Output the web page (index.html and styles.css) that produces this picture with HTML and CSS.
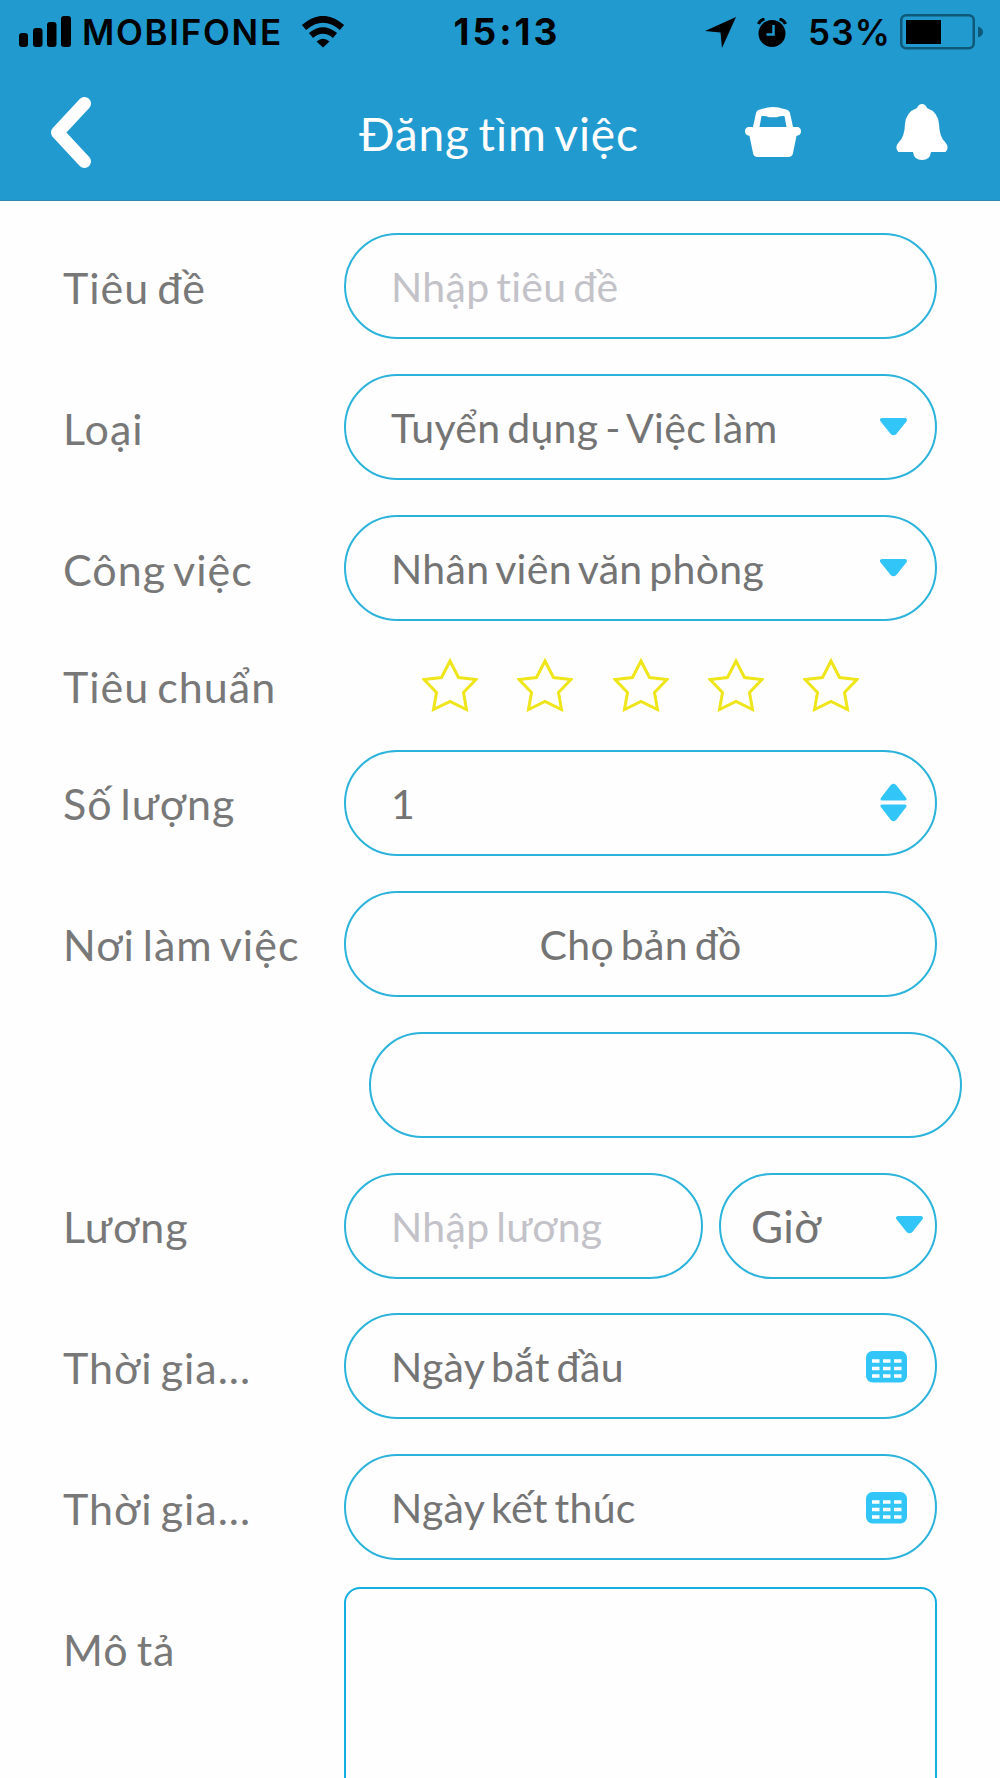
FILE: index.html
```html
<!DOCTYPE html>
<html lang="vi">
<head>
    <meta charset="UTF-8">
    <meta name="viewport" content="width=device-width, initial-scale=1.0">
    <title>Đăng tìm việc</title>
    <link rel="stylesheet" href="styles.css">
</head>
<body>
    <header class="header">
        <div class="status-bar">
            <div class="status-left">
                <svg class="signal" width="52" height="32" viewBox="0 0 52 32">
                    <rect x="0" y="17" width="9" height="14" rx="3"/>
                    <rect x="14" y="12" width="9.500" height="19" rx="3"/>
                    <rect x="28" y="6" width="9.500" height="25" rx="3"/>
                    <rect x="42" y="0" width="10" height="31" rx="3"/>
                </svg>
                <span class="carrier">MOBIFONE</span>
                <svg class="wifi" width="44" height="32" viewBox="0 0 44 32">
                    <path d="M3 11.500Q22-5 41 11.500" fill="none" stroke="#000" stroke-width="6.500"/>
                    <path d="M10 19.500Q22 9.500 34 19.500" fill="none" stroke="#000" stroke-width="6.500"/>
                    <path d="M15.500 25.500Q22 20 28.500 25.500L22 31.500z"/>
                </svg>
            </div>
            <span class="clock">15:13</span>
            <div class="status-right">
                <svg class="location" width="31" height="31" viewBox="0 0 31 31">
                    <path d="M31 0L17 31L15.500 15.500L0 14z"/>
                </svg>
                <svg class="alarm" width="30" height="29" viewBox="0 0 30 29">
                    <circle cx="15" cy="15.500" r="13.500"/>
                    <path d="M1.500 6Q3 2 7.500 1M28.500 6Q27 2 22.500 1" fill="none" stroke="#000" stroke-width="3"/>
                    <path d="M16.500 7v9.500H9.500" fill="none" stroke="#219ad0" stroke-width="2.500"/>
                </svg>
                <span class="percent">53%</span>
                <svg class="battery" width="83" height="36" viewBox="0 0 83 36">
                    <rect x="1.250" y="1.250" width="72.500" height="33" rx="5" fill="none" stroke="#0e5878" stroke-width="2.500"/>
                    <rect x="6" y="6" width="35" height="24"/>
                    <path d="M78 12.500q5 1.500 5 5.500t-5 5.500z" fill="#0e5878"/>
                </svg>
            </div>
        </div>
        <nav class="nav-bar">
            <svg class="back" width="41" height="71" viewBox="0 0 41 71">
                <path d="M34.500 6.500L7.500 35.500L34.500 64.500" fill="none" stroke="#fff" stroke-width="13" stroke-linecap="round" stroke-linejoin="round"/>
            </svg>
            <h1 class="title">Đăng tìm việc</h1>
            <div class="nav-icons">
                <svg width="56" height="50" viewBox="0 0 56 50">
                    <path d="M4 20H8L11 6Q12 2.500 17 2Q28-2 39 2Q44 2.500 45 6L48 20H52Q56 20 56 24.500Q56 28 51.500 29L48 46Q47.500 50 43 50H13Q8.500 50 8 46L4.500 29Q0 28 0 24.500Q0 20 4 20z"/>
                    <path class="basket-hole" d="M16.500 9Q22 9 24 10.200H32Q34 9 39.500 9L41.500 20H14.500z"/>
                </svg>
                <svg width="52" height="56" viewBox="0 0 52 56">
                    <path d="M26 0Q29.500 0 31 4Q42 8 43 20Q43.500 33 49 38Q54 43.500 49.500 48H35Q34 56 26 56Q18 56 17 48H2.500Q-2 43.500 3 38Q8.500 33 9 20Q10 8 21 4Q22.500 0 26 0z"/>
                </svg>
            </div>
        </nav>
    </header>

    <form class="form">
        <div class="row">
            <label>Tiêu đề</label>
            <input class="field" type="text" placeholder="Nhập tiêu đề">
        </div>
        <div class="row">
            <label>Loại</label>
            <div class="field">
                <span>Tuyển dụng - Việc làm</span>
                <svg class="arrow" width="27" height="20" viewBox="0 0 27 20"><path d="M2 2H25L15 14.500Q13.500 16 12 14.500z"/></svg>
            </div>
        </div>
        <div class="row">
            <label>Công việc</label>
            <div class="field">
                <span>Nhân viên văn phòng</span>
                <svg class="arrow" width="27" height="20" viewBox="0 0 27 20"><path d="M2 2H25L15 14.500Q13.500 16 12 14.500z"/></svg>
            </div>
        </div>
        <div class="row row-stars">
            <label>Tiêu chuẩn</label>
            <div class="stars">
                <svg width="56" height="54" viewBox="0 0 56 54"><path d="M28 3L36.500 19.500L54 21.500L41.500 34.500L44.500 51.500L28 43.500L11.500 51.500L14.500 34.500L2 21.500L19.500 19.500z"/></svg>
                <svg width="56" height="54" viewBox="0 0 56 54"><path d="M28 3L36.500 19.500L54 21.500L41.500 34.500L44.500 51.500L28 43.500L11.500 51.500L14.500 34.500L2 21.500L19.500 19.500z"/></svg>
                <svg width="56" height="54" viewBox="0 0 56 54"><path d="M28 3L36.500 19.500L54 21.500L41.500 34.500L44.500 51.500L28 43.500L11.500 51.500L14.500 34.500L2 21.500L19.500 19.500z"/></svg>
                <svg width="56" height="54" viewBox="0 0 56 54"><path d="M28 3L36.500 19.500L54 21.500L41.500 34.500L44.500 51.500L28 43.500L11.500 51.500L14.500 34.500L2 21.500L19.500 19.500z"/></svg>
                <svg width="56" height="54" viewBox="0 0 56 54"><path d="M28 3L36.500 19.500L54 21.500L41.500 34.500L44.500 51.500L28 43.500L11.500 51.500L14.500 34.500L2 21.500L19.500 19.500z"/></svg>
            </div>
        </div>
        <div class="row">
            <label>Số lượng</label>
            <div class="field">
                <span>1</span>
                <svg class="stepper" width="27" height="41" viewBox="0 0 27 41">
                    <path d="M2 16L12 3Q13.500 1.500 15 3L25 16z"/>
                    <path d="M2 23H25L15 36Q13.500 37.500 12 36z"/>
                </svg>
            </div>
        </div>
        <div class="row">
            <label>Nơi làm việc</label>
            <button class="field field-button" type="button">Chọ bản đồ</button>
        </div>
        <div class="row">
            <label></label>
            <input class="field field-shifted" type="text">
        </div>
        <div class="row">
            <label>Lương</label>
            <div class="salary">
                <input class="field" type="text" placeholder="Nhập lương">
                <div class="field field-unit">
                    <span>Giờ</span>
                    <svg class="arrow" width="27" height="20" viewBox="0 0 27 20"><path d="M2 2H25L15 14.500Q13.500 16 12 14.500z"/></svg>
                </div>
            </div>
        </div>
        <div class="row">
            <label>Thời gia...</label>
            <div class="field">
                <span>Ngày bắt đầu</span>
                <svg class="calendar" width="41" height="32" viewBox="0 0 41 32">
                    <rect width="41" height="31.500" rx="6.500"/>
                    <path d="M6 10h7.500M17 10h7.500M28 10h7.500M6 17.500h7.500M17 17.500h7.500M28 17.500h7.500M6 25h7.500M17 25h7.500M28 25h7.500"/>
                </svg>
            </div>
        </div>
        <div class="row">
            <label>Thời gia...</label>
            <div class="field">
                <span>Ngày kết thúc</span>
                <svg class="calendar" width="41" height="32" viewBox="0 0 41 32">
                    <rect width="41" height="31.500" rx="6.500"/>
                    <path d="M6 10h7.500M17 10h7.500M28 10h7.500M6 17.500h7.500M17 17.500h7.500M28 17.500h7.500M6 25h7.500M17 25h7.500M28 25h7.500"/>
                </svg>
            </div>
        </div>
        <div class="row row-description">
            <label>Mô tả</label>
            <textarea class="field field-area"></textarea>
        </div>
    </form>
</body>
</html>
```
FILE: styles.css
```css
* {
    box-sizing: border-box;
}
body {
    font-family: Lato, sans-serif;
    font-variant-ligatures: none;
    background-color: #fefefe;
    margin: 0;
    height: 1778px;
    overflow: hidden;
    color: #787878;
}
svg {
    display: block;
    flex-shrink: 0;
}
.header {
    height: 201px;
    background-color: #219ad0;
    border-bottom: 1px solid #2c86b0;
}
.status-bar {
    display: grid;
    grid-template-columns: 1fr auto 1fr;
    align-items: center;
    height: 64px;
    padding: 0 17px 0 19px;
    font-family: Inter, sans-serif;
    font-size: 35px;
    line-height: 64px;
    color: #000;
}
.status-left, .status-right {
    display: flex;
    align-items: center;
}
.status-right {
    justify-content: flex-end;
}
.carrier {
    margin-left: 11px;
    font-weight: 600;
    letter-spacing: 1.7px;
}
.wifi {
    margin-left: 18px;
}
.clock {
    margin-left: 12px;
    font-size: 37px;
    font-weight: 700;
    letter-spacing: 3px;
}
.alarm {
    margin-left: 21px;
}
.percent {
    margin-left: 21px;
    font-weight: 600;
    letter-spacing: 1.2px;
}
.battery {
    margin-left: 9px;
}
.nav-bar {
    display: grid;
    grid-template-columns: 1fr auto 1fr;
    align-items: center;
    height: 136px;
    padding: 0 52px 0 50px;
}
.title {
    margin: 0;
    padding-top: 2px;
    font-size: 46px;
    font-weight: 400;
    letter-spacing: 0.9px;
    word-spacing: -4px;
    color: #fff;
}
.nav-icons {
    display: flex;
    align-items: center;
    justify-content: flex-end;
    gap: 95px;
    fill: #fff;
}
.basket-hole {
    fill: #219ad0;
}
.form {
    display: flex;
    flex-direction: column;
    gap: 34.9px;
    padding: 32.3px 63px 0;
}
.row {
    display: grid;
    grid-template-columns: 281px 593px;
    align-items: center;
    height: 106px;
}
label {
    padding-top: 2px;
    font-size: 43px;
    letter-spacing: 1px;
    word-spacing: -4px;
    white-space: nowrap;
}
.field {
    display: flex;
    align-items: center;
    justify-content: space-between;
    width: 100%;
    height: 106px;
    padding: 1px 28px 0 45px;
    border: 2px solid #2bb3db;
    border-radius: 53px;
    background: transparent;
    font-family: inherit;
    font-size: 41px;
    font-variant-ligatures: none;
    letter-spacing: 0.3px;
    word-spacing: -4px;
    color: #747474;
    outline: none;
}
.field::placeholder {
    color: #c2c2c8;
    opacity: 1;
}
.field-button {
    justify-content: center;
    padding: 1px 0 0;
}
.field-shifted {
    margin-left: 25px;
}
.field-unit {
    padding: 1px 12px 0 30px;
    font-size: 44px;
}
.arrow, .stepper {
    fill: #32c5f8;
    stroke: #32c5f8;
    stroke-width: 4;
    stroke-linejoin: round;
}
.stepper {
    stroke-width: 3;
}
.calendar rect {
    fill: #32c5f8;
}
.calendar path {
    stroke: #fff;
    stroke-width: 3.5;
}
.row-stars {
    height: 59px;
}
.stars {
    display: flex;
    justify-content: center;
    gap: 39.2px;
}
.stars svg {
    fill: none;
    stroke: #eee51a;
    stroke-width: 3;
}
.salary {
    display: grid;
    grid-template-columns: 359px 218px;
    gap: 16px;
}
.row-description {
    margin-top: -8px;
    align-items: start;
}
.row-description label {
    line-height: 121px;
}
.field-area {
    height: 240px;
    border-color: #14aee0;
    border-radius: 16px;
    resize: none;
}
```
